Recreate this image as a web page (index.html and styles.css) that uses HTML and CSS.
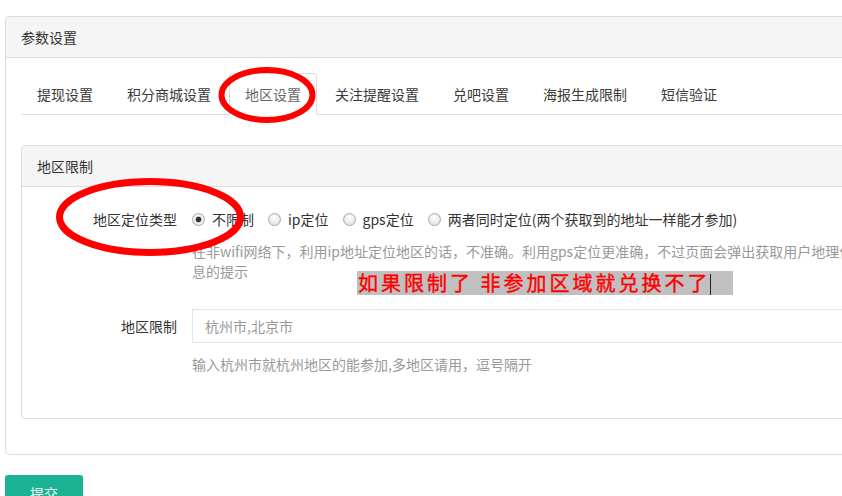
FILE: index.html
```html
<!DOCTYPE html>
<html lang="zh-CN">
<head>
<meta charset="utf-8">
<title>参数设置</title>
<link rel="stylesheet" href="styles.css">
</head>
<body>
<div class="page">
  <div class="panel panel-outer">
    <div class="panel-heading">参数设置</div>
    <div class="panel-body">
      <ul class="tabs">
        <li class="tab"><a>提现设置</a></li>
        <li class="tab"><a>积分商城设置</a></li>
        <li class="tab active"><a>地区设置</a></li>
        <li class="tab"><a>关注提醒设置</a></li>
        <li class="tab"><a>兑吧设置</a></li>
        <li class="tab"><a>海报生成限制</a></li>
        <li class="tab"><a>短信验证</a></li>
      </ul>
      <div class="tab-content">
        <div class="panel panel-inner">
          <div class="panel-heading">地区限制</div>
          <div class="panel-body form-body">
            <div class="form-row row-type">
              <label class="control-label">地区定位类型</label>
              <div class="controls">
                <div class="radios">
                  <label class="radio-inline"><input type="radio" name="loc" checked><span>不限制</span></label>
                  <label class="radio-inline"><input type="radio" name="loc"><span>ip定位</span></label>
                  <label class="radio-inline"><input type="radio" name="loc"><span>gps定位</span></label>
                  <label class="radio-inline"><input type="radio" name="loc"><span>两者同时定位(两个获取到的地址一样能才参加)</span></label>
                </div>
                <p class="help">在非wifi网络下，利用ip地址定位地区的话，不准确。利用gps定位更准确，不过页面会弹出获取用户地理位置信息的提示</p>
              </div>
            </div>
            <div class="form-row">
              <label class="control-label">地区限制</label>
              <div class="controls">
                <input class="text-input" type="text" placeholder="杭州市,北京市">
                <p class="help">输入杭州市就杭州地区的能参加,多地区请用，逗号隔开</p>
              </div>
            </div>
          </div>
        </div>
      </div>
    </div>
  </div>
  <button class="btn-submit" type="button">提交</button>

  <svg class="mark mark-tab" width="104" height="64" viewBox="0 0 104 64">
    <ellipse cx="52" cy="32" rx="45.5" ry="25" fill="none" stroke="#ff0000" stroke-width="6"/>
  </svg>
  <svg class="mark mark-label" width="200" height="90" viewBox="0 0 200 90">
    <ellipse cx="100" cy="45" rx="90.5" ry="35.5" fill="none" stroke="#ff0000" stroke-width="7"/>
  </svg>
  <div class="note">如果限制了 非参加区域就兑换不了<span class="caret"></span></div>
</div>
</body>
</html>
```
FILE: styles.css
```css
html, body {
  margin: 0;
  padding: 0;
  overflow: hidden;
  background: #ffffff;
}
body {
  font-family: "Noto Sans CJK SC", "Noto Sans", sans-serif;
  font-size: 14px;
  line-height: 20px;
  color: #333333;
}
.page {
  position: relative;
  padding: 16px 0 0 5px;
  width: 917px;
}
.panel {
  border: 1px solid #dddddd;
  border-radius: 4px;
  background: #ffffff;
}
.panel-heading {
  background: #f5f5f5;
  border-bottom: 1px solid #dddddd;
  padding: 10px 15px;
  border-radius: 3px 3px 0 0;
}
.panel-outer {
  margin-bottom: 20px;
}
.panel-outer > .panel-body {
  padding: 15px;
}
.tabs {
  list-style: none;
  margin: 0;
  padding: 0;
  display: flex;
  border-bottom: 1px solid #dddddd;
}
.tab {
  margin: 0 2px -1px 0;
}
.tab a {
  display: block;
  padding: 10px 15px;
  border: 1px solid transparent;
  border-radius: 4px 4px 0 0;
  color: #3a3a3a;
}
.tab.active a {
  border-color: #dddddd;
  border-bottom-color: #ffffff;
  background: #ffffff;
  color: #666666;
}
.tab-content {
  padding-top: 30px;
}
.panel-inner {
  margin-bottom: 20px;
}
.form-body {
  padding: 15px 15px 44px;
  display: flex;
  flex-direction: column;
  gap: 28px;
}
.form-row {
  display: grid;
  grid-template-columns: 140px 1fr;
  column-gap: 15px;
}
.control-label {
  text-align: right;
  padding-top: 7px;
}
.radios {
  display: flex;
  padding-top: 7px;
  white-space: nowrap;
}
.radio-inline {
  display: flex;
  align-items: center;
  margin-right: 14px;
}
.radio-inline input {
  appearance: none;
  -webkit-appearance: none;
  width: 13px;
  height: 13px;
  margin: 0 7px 0 0;
  border: 1px solid #a9a9a9;
  border-radius: 50%;
  background: radial-gradient(circle at 50% 35%, #ffffff 0%, #f0f0f0 45%, #d4d4d4 100%);
  box-sizing: border-box;
}
.radio-inline input:checked {
  background: radial-gradient(circle, #333333 0 2.4px, #5a5a5a 2.6px, #e4e4e4 3.2px, #f4f4f4 55%, #d4d4d4 100%);
}
.help {
  margin: 12px 0 0;
  color: #999999;
}
.text-input {
  display: block;
  width: 100%;
  height: 34px;
  box-sizing: border-box;
  border: 1px solid #e5e6e7;
  padding: 6px 12px;
  font-family: inherit;
  font-size: 14px;
  color: #555555;
  outline: none;
}
.text-input::placeholder {
  color: #999999;
}
.form-row:last-child .help {
  margin-top: 11px;
}
.btn-submit {
  display: block;
  width: 78px;
  height: 36px;
  border: 0;
  border-radius: 3px;
  background: #1ab394;
  color: #ffffff;
  font-family: inherit;
  font-size: 14px;
  line-height: 20px;
  padding: 0;
}
.mark {
  position: absolute;
}
.mark-tab {
  left: 215px;
  top: 63px;
}
.mark-label {
  left: 50px;
  top: 172px;
}
.note {
  position: absolute;
  left: 357px;
  top: 271px;
  width: 376px;
  height: 24px;
  padding-left: 1px;
  box-sizing: border-box;
  background: #c0c0c0;
  color: #ff0000;
  font-size: 20px;
  line-height: 24px;
  letter-spacing: 3px;
  white-space: nowrap;
  -webkit-text-stroke: 0.4px #ff0000;
}
.caret {
  display: inline-block;
  width: 1px;
  height: 21px;
  background: #222222;
  vertical-align: -4px;
  margin-left: 0;
}
```
